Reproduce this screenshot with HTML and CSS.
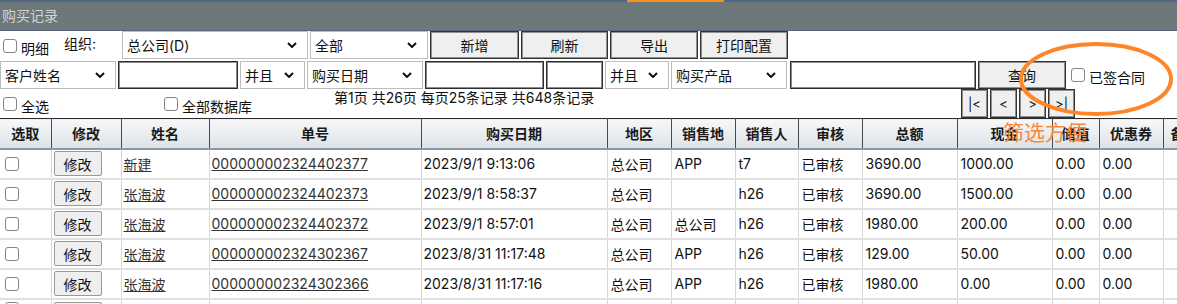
FILE: index.html
```html
<!DOCTYPE html>
<html lang="zh-CN">
<head>
<meta charset="utf-8">
<title>购买记录</title>
<link rel="stylesheet" href="styles.css">
</head>
<body>
<div class="topstrip"><span class="topstrip-accent"></span></div>
<div class="titlebar">购买记录</div>

<div class="bar bar1">
  <label class="chk-label lbl-detail"><input type="checkbox" class="chk"><span class="low">明细</span></label>
  <span class="org-label">组织:</span>
  <div class="group">
    <div class="sel w186"><select><option>总公司(D)</option></select><svg class="chev" viewBox="0 0 10 6"><path d="M1 1l4 4 4-4" /></svg></div>
    <div class="sel w118"><select><option>全部</option></select><svg class="chev" viewBox="0 0 10 6"><path d="M1 1l4 4 4-4" /></svg></div>
    <button class="btn w89">新增</button>
    <button class="btn w87">刷新</button>
    <button class="btn w88">导出</button>
    <button class="btn w88">打印配置</button>
  </div>
</div>

<div class="bar bar2">
  <div class="sel w116"><select><option>客户姓名</option></select><svg class="chev" viewBox="0 0 10 6"><path d="M1 1l4 4 4-4" /></svg></div>
  <input class="inp w120" type="text">
  <div class="sel w65"><select><option>并且</option></select><svg class="chev" viewBox="0 0 10 6"><path d="M1 1l4 4 4-4" /></svg></div>
  <div class="sel w116"><select><option>购买日期</option></select><svg class="chev" viewBox="0 0 10 6"><path d="M1 1l4 4 4-4" /></svg></div>
  <input class="inp w119" type="text">
  <input class="inp w57" type="text">
  <div class="sel w64"><select><option>并且</option></select><svg class="chev" viewBox="0 0 10 6"><path d="M1 1l4 4 4-4" /></svg></div>
  <div class="sel w116"><select><option>购买产品</option></select><svg class="chev" viewBox="0 0 10 6"><path d="M1 1l4 4 4-4" /></svg></div>
  <input class="inp w186 gap3" type="text">
  <button class="btn w88">查询</button>
  <label class="chk-label lbl-signed"><input type="checkbox" class="chk"><span class="low">已签合同</span></label>
</div>

<div class="bar bar3">
  <label class="chk-label lbl-all"><input type="checkbox" class="chk"><span class="low">全选</span></label>
  <label class="chk-label lbl-db"><input type="checkbox" class="chk"><span class="low">全部数据库</span></label>
  <span class="pageinfo">第1页 共26页 每页25条记录 共648条记录</span>
  <div class="pager">
    <button class="btn pbtn">|&lt;</button>
    <button class="btn pbtn">&lt;</button>
    <button class="btn pbtn">&gt;</button>
    <button class="btn pbtn">&gt;|</button>
  </div>
</div>

<table class="grid">
  <colgroup>
    <col class="c51"><col class="c70"><col class="c88"><col class="c212"><col class="c186">
    <col class="c64"><col class="c64"><col class="c63"><col class="c64"><col class="c95">
    <col class="c95"><col class="c47"><col class="c64"><col class="c47">
  </colgroup>
  <thead>
    <tr><th>选取</th><th>修改</th><th>姓名</th><th>单号</th><th>购买日期</th><th>地区</th><th>销售地</th><th>销售人</th><th>审核</th><th>总额</th><th>现金</th><th>储值</th><th>优惠券</th><th>备注</th></tr>
  </thead>
  <tbody>
    <tr><td><input type="checkbox" class="chk cell-chk"></td><td><button class="edit">修改</button></td><td><a href="#">新建</a></td><td><a href="#">000000002324402377</a></td><td>2023/9/1 9:13:06</td><td>总公司</td><td>APP</td><td>t7</td><td>已审核</td><td>3690.00</td><td>1000.00</td><td>0.00</td><td>0.00</td><td></td></tr>
    <tr><td><input type="checkbox" class="chk cell-chk"></td><td><button class="edit">修改</button></td><td><a href="#">张海波</a></td><td><a href="#">000000002324402373</a></td><td>2023/9/1 8:58:37</td><td>总公司</td><td></td><td>h26</td><td>已审核</td><td>3690.00</td><td>1500.00</td><td>0.00</td><td>0.00</td><td></td></tr>
    <tr><td><input type="checkbox" class="chk cell-chk"></td><td><button class="edit">修改</button></td><td><a href="#">张海波</a></td><td><a href="#">000000002324402372</a></td><td>2023/9/1 8:57:01</td><td>总公司</td><td>总公司</td><td>h26</td><td>已审核</td><td>1980.00</td><td>200.00</td><td>0.00</td><td>0.00</td><td></td></tr>
    <tr><td><input type="checkbox" class="chk cell-chk"></td><td><button class="edit">修改</button></td><td><a href="#">张海波</a></td><td><a href="#">000000002324302367</a></td><td>2023/8/31 11:17:48</td><td>总公司</td><td>APP</td><td>h26</td><td>已审核</td><td>129.00</td><td>50.00</td><td>0.00</td><td>0.00</td><td></td></tr>
    <tr><td><input type="checkbox" class="chk cell-chk"></td><td><button class="edit">修改</button></td><td><a href="#">张海波</a></td><td><a href="#">000000002324302366</a></td><td>2023/8/31 11:17:16</td><td>总公司</td><td>APP</td><td>h26</td><td>已审核</td><td>1980.00</td><td>0.00</td><td>0.00</td><td>0.00</td><td></td></tr>
    <tr class="cut-row"><td><input type="checkbox" class="chk cell-chk"></td><td><button class="edit">修改</button></td><td></td><td></td><td></td><td></td><td></td><td></td><td></td><td></td><td></td><td></td><td></td><td></td></tr>
  </tbody>
</table>

<svg class="anno-ring" viewBox="0 0 158 80"><ellipse cx="78" cy="38" rx="75" ry="35" /></svg>
<div class="anno-text">筛选方便</div>
</body>
</html>
```

FILE: styles.css
```css
* { box-sizing: border-box; }
html, body { margin: 0; padding: 0; }
body {
  width: 1177px;
  height: 304px;
  overflow: hidden;
  position: relative;
  background: #fff;
  color: #111;
  font-family: "Inter", "Noto Sans CJK SC", sans-serif;
  font-size: 14px;
}

.topstrip { height: 2px; background: #4e6784; position: relative; }
.topstrip-accent { position: absolute; left: 627px; top: 0; width: 97px; height: 2px; background: #f7931e; }
.titlebar {
  height: 29px;
  background: #6e7779;
  border-bottom: 1px solid #56677d;
  color: #cfd4d6;
  padding-left: 2px;
  line-height: 28px;
  font-size: 14px;
}

.bar { display: flex; align-items: stretch; }
.bar1 { height: 29px; }
.bar2 { height: 29px; gap: 2px; padding-top: 1px; }
.bar3 { height: 29px; }

.chk {
  appearance: none;
  -webkit-appearance: none;
  width: 14px; height: 14px;
  margin: 0;
  border: 1px solid #858585;
  border-radius: 3px;
  background: #fff;
  flex: none;
}
.chk-label { display: flex; align-items: center; gap: 4px; white-space: nowrap; }
.chk-label .low { position: relative; top: 2px; }
.lbl-detail { width: 61px; padding-left: 3px; }
.org-label { width: 61px; padding-left: 3px; line-height: 26px; }
.group { display: flex; gap: 2px; }

.sel { position: relative; height: 28px; flex: none; }
.sel select {
  appearance: none;
  -webkit-appearance: none;
  width: 100%; height: 100%;
  margin: 0;
  border: 1px solid #bdbdbd;
  background: #fff;
  font: inherit;
  color: #111;
  padding: 0 0 0 4px;
  outline: none;
}
.chev {
  position: absolute;
  right: 11px; top: 11px;
  width: 10px; height: 6px;
  fill: none; stroke: #111; stroke-width: 2;
  pointer-events: none;
}

.inp {
  height: 28px;
  margin: 0;
  border: 1px solid #2e2e2e;
  box-shadow: inset 0 0 0 1px #8c8c8c;
  background: #fff;
  flex: none;
  font: inherit;
}
.gap3 { margin-left: 1px; }

.btn {
  height: 28px;
  margin: 0;
  padding: 0;
  border: 1px solid #333;
  box-shadow: inset 0 0 0 1px #8f8f8f;
  background: #efefef;
  font: inherit;
  color: #111;
  flex: none;
}

.w186 { width: 186px; }
.w118 { width: 118px; }
.w89 { width: 89px; }
.w87 { width: 87px; }
.w88 { width: 88px; }
.w116 { width: 116px; }
.w120 { width: 120px; }
.w65 { width: 65px; }
.w119 { width: 119px; }
.w57 { width: 57px; }
.w64 { width: 64px; }

.lbl-signed { margin-left: 3px; }

.lbl-all { width: 164px; padding-left: 3px; }
.lbl-db { width: 170px; }
.pageinfo { line-height: 18px; width: 624px; }
.pager { display: flex; gap: 2px; margin-left: 3px; }
.pbtn { width: 27px; height: 29px; font-size: 13px; }

.grid {
  border-collapse: collapse;
  table-layout: fixed;
  width: 1210px;
}
.c51 { width: 51px; } .c70 { width: 70px; } .c88 { width: 88px; } .c212 { width: 212px; }
.c186 { width: 186px; } .c64 { width: 64px; } .c63 { width: 63px; } .c95 { width: 95px; }
.c47 { width: 47px; }

.grid th {
  height: 30px;
  padding: 0;
  font-weight: bold;
  color: #1a1a1a;
  text-align: center;
  white-space: nowrap;
  overflow: hidden;
  background: linear-gradient(#f6f8fa, #dde2e7);
  border-top: 1px solid #2a2a2a;
  border-right: 1px solid #4a4a4a;
  border-bottom: 2px solid #8d98a3;
}
.grid th:last-child { text-align: left; padding-left: 7px; }
.grid td {
  height: 30px;
  padding: 0 3px;
  white-space: nowrap;
  overflow: hidden;
  border-right: 1px solid #d6d6d6;
  border-bottom: 2px solid #e0e0e0;
  color: #111;
}
.grid td:first-child { padding-left: 5px; }
.grid td:nth-child(2), .grid td:nth-child(3), .grid td:nth-child(4), .grid td:nth-child(5) { padding-left: 2px; }
.grid .cut-row td { vertical-align: top; padding-top: 2px; }
.cell-chk { display: block; }
.grid a { color: #333; text-decoration: underline; }
.edit {
  width: 48px; height: 25px;
  margin: 0; padding: 0;
  border: 1px solid #999;
  border-radius: 2px;
  background: #efefef;
  font: inherit;
  color: #111;
  display: block;
}

.anno-ring {
  position: absolute;
  left: 1018px; top: 41px;
  width: 158px; height: 80px;
  fill: none; stroke: #ff8526; stroke-width: 4;
  overflow: visible;
}
.anno-text {
  position: absolute;
  left: 1003px; top: 118px;
  font-size: 21px;
  line-height: 30px;
  color: #f7873a;
}
```
